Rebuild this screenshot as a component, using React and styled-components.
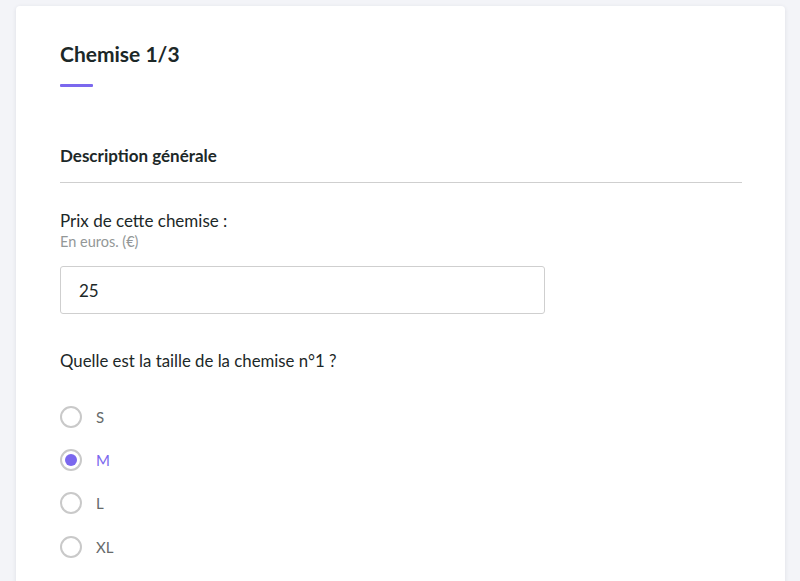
import React, { useState } from "react";
import styled, { createGlobalStyle } from "styled-components";

const Global = createGlobalStyle`
  html, body { margin: 0; padding: 0; }
  body {
    background: #f3f4f8;
    font-family: Lato, "Open Sans", sans-serif;
    color: #1c2828;
  }
`;

const Page = styled.div`
  padding: 6px 15px 0 16px;
  height: 581px;
  box-sizing: border-box;
  overflow: hidden;
`;

const Card = styled.div`
  background: #fff;
  border-radius: 4px;
  box-shadow: 0 1px 4px rgba(30, 40, 70, 0.1);
  padding: 34px 43px 40px 44px;
  min-height: 700px;
  box-sizing: border-box;
`;

const Title = styled.h1`
  margin: 0;
  font-size: 21px;
  line-height: 28px;
  font-weight: 700;
`;

const Accent = styled.div`
  width: 33px;
  height: 3px;
  margin-top: 16px;
  background: #7b68ee;
  border-radius: 1px;
`;

const SectionTitle = styled.h2`
  margin: 57px 0 0;
  font-size: 17px;
  line-height: 24px;
  font-weight: 700;
  padding-bottom: 14px;
  border-bottom: 1.5px solid #cfcfcf;
`;

const Label = styled.div`
  margin-top: 26px;
  font-size: 17px;
  line-height: 24px;
`;

const Hint = styled.div`
  font-size: 14.5px;
  line-height: 18px;
  color: #939797;
`;

const Input = styled.input`
  display: block;
  margin-top: 15px;
  width: 485px;
  height: 48px;
  box-sizing: border-box;
  border: 1px solid #cfcfcf;
  border-radius: 3px;
  padding: 0 18px;
  font-family: inherit;
  font-size: 17px;
  color: #1c2828;
  outline: none;
`;

const Question = styled.div`
  margin-top: 35px;
  font-size: 16.8px;
  line-height: 24px;
`;

const Options = styled.div`
  margin-top: 22px;
  display: flex;
  flex-direction: column;
`;

const Option = styled.label`
  display: flex;
  align-items: center;
  gap: 14px;
  height: 43.4px;
  cursor: pointer;
  font-size: 15px;
  color: ${(p) => (p.$checked ? "#7b68ee" : "#666a6a")};
`;

const Circle = styled.span`
  width: 22px;
  height: 22px;
  box-sizing: border-box;
  border-radius: 50%;
  border: 2px solid #c9c9c9;
  display: flex;
  align-items: center;
  justify-content: center;
  &::after {
    content: "";
    width: 12px;
    height: 12px;
    border-radius: 50%;
    background: ${(p) => (p.$checked ? "#7b68ee" : "transparent")};
  }
`;

const HiddenRadio = styled.input`
  display: none;
`;

const sizes = ["S", "M", "L", "XL"];

export default function App() {
  const [size, setSize] = useState("M");
  const [price, setPrice] = useState("25");
  return (
    <Page>
      <Global />
      <Card>
        <Title>Chemise 1/3</Title>
        <Accent />
        <SectionTitle>Description générale</SectionTitle>
        <Label>Prix de cette chemise :</Label>
        <Hint>En euros. (€)</Hint>
        <Input value={price} onChange={(e) => setPrice(e.target.value)} />
        <Question>Quelle est la taille de la chemise n°1{"\u202F"}?</Question>
        <Options>
          {sizes.map((s) => (
            <Option key={s} $checked={size === s}>
              <HiddenRadio
                type="radio"
                name="size"
                checked={size === s}
                onChange={() => setSize(s)}
              />
              <Circle $checked={size === s} />
              {s}
            </Option>
          ))}
        </Options>
      </Card>
    </Page>
  );
}
